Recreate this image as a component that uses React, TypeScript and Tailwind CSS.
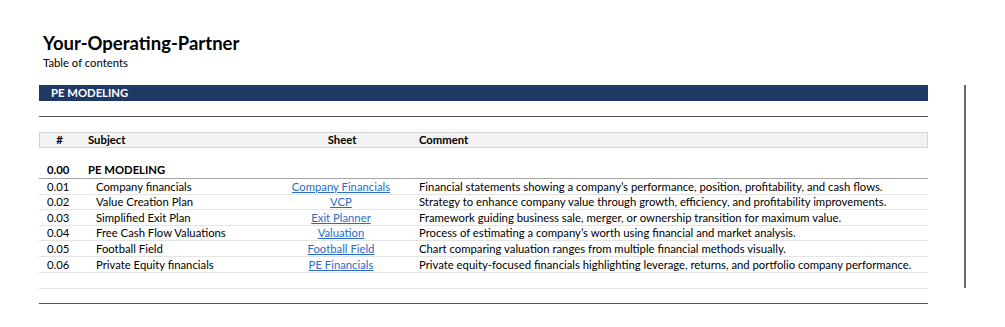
import React from 'react';

const rows = [
  { num: '0.01', subject: 'Company financials', sheet: 'Company Financials', comment: 'Financial statements showing a company\u2019s performance, position, profitability, and cash flows.' },
  { num: '0.02', subject: 'Value Creation Plan', sheet: 'VCP', comment: 'Strategy to enhance company value through growth, efficiency, and profitability improvements.' },
  { num: '0.03', subject: 'Simplified Exit Plan', sheet: 'Exit Planner', comment: 'Framework guiding business sale, merger, or ownership transition for maximum value.' },
  { num: '0.04', subject: 'Free Cash Flow Valuations', sheet: 'Valuation', comment: 'Process of estimating a company\u2019s worth using financial and market analysis.' },
  { num: '0.05', subject: 'Football Field', sheet: 'Football Field', comment: 'Chart comparing valuation ranges from multiple financial methods visually.' },
  { num: '0.06', subject: 'Private Equity financials', sheet: 'PE Financials', comment: 'Private equity-focused financials highlighting leverage, returns, and portfolio company performance.' },
];

const cols = 'grid grid-cols-[39px_212px_102px_1fr] items-center';

export default function App() {
  return (
    <div className="w-[1005px] h-[327px] bg-white text-black font-['Lato',sans-serif] text-[11.3px] leading-none relative overflow-hidden">
      <div className="flex">
        <div className="w-[889px] ml-[39px] pt-[33px]">
          <div className="pl-[4px] text-[18.5px] font-bold leading-[20px]">Your-Operating-Partner</div>
          <div className="pl-[4px] mt-[4px] leading-[12px]">Table of contents</div>

          <div className="mt-[16px] h-[16px] bg-[#203864] text-white font-bold flex items-center pl-[12px]">PE MODELING</div>

          <div className="mt-[15px] h-[1px] bg-[#555]" />

          <div className={`${cols} mt-[15px] h-[16px] bg-[#f2f2f2] border border-[#d4d4d4] font-bold`}>
            <div className="text-center">#</div>
            <div className="pl-[9px]">Subject</div>
            <div className="text-center">Sheet</div>
            <div className="pl-[26px]">Comment</div>
          </div>

          <div className={`${cols} mt-[13px] h-[18px] font-bold border-b border-[#a6a6a6]`}>
            <div className="pl-[8px]">0.00</div>
            <div className="pl-[10px]">PE MODELING</div>
          </div>

          {rows.map((r) => (
            <div key={r.num} className={`${cols} h-[15.6px] border-b border-[#e4e4e4]`}>
              <div className="pl-[8px]">{r.num}</div>
              <div className="pl-[18px]">{r.subject}</div>
              <div className="text-center">
                <a href="#" className="text-[#2a6bc9] underline underline-offset-[1px]">{r.sheet}</a>
              </div>
              <div className="pl-[27px] whitespace-nowrap">{r.comment}</div>
            </div>
          ))}
          <div className="h-[16px] border-b border-[#e4e4e4]" />

          <div className="mt-[14px] h-[1px] bg-[#555]" />
        </div>
        <div className="ml-[36px] mt-[85px] w-[2px] h-[203px] bg-[#6b6b6b]" />
      </div>
    </div>
  );
}
